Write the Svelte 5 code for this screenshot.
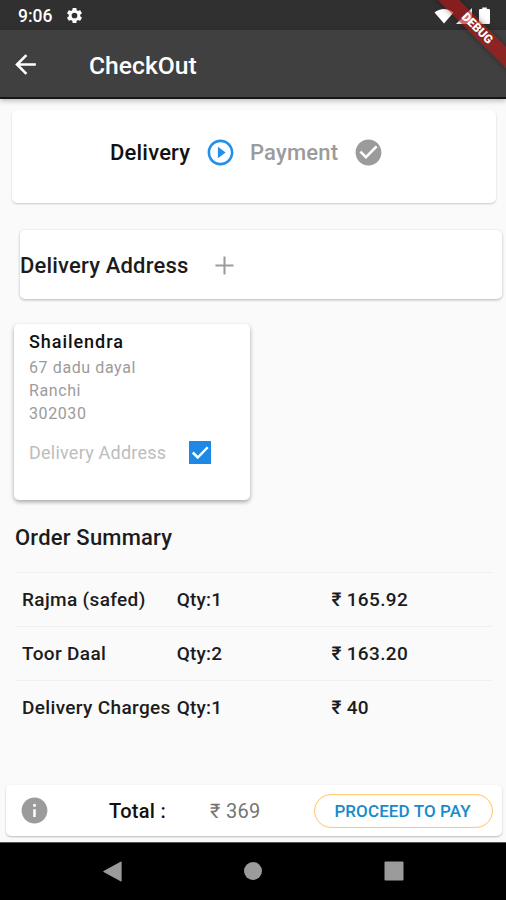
<script>
  const address = {
    name: 'Shailendra',
    lines: ['67 dadu dayal', 'Ranchi', '302030'],
  }

  const items = [
    { name: 'Rajma (safed)', qty: 1, price: '165.92' },
    { name: 'Toor Daal', qty: 2, price: '163.20' },
    { name: 'Delivery Charges', qty: 1, price: '40' },
  ]

  let isDelivery = $state(true)
  let total = 369
</script>

<div class="screen">
  <div class="status-bar">
    <span class="clock">9:06</span>
    <svg class="gear" viewBox="0 0 24 24">
      <path fill-rule="evenodd" d="M19.14 12.94c.04-.3.06-.61.06-.94 0-.32-.02-.64-.07-.94l2.03-1.58c.18-.14.23-.41.12-.61l-1.92-3.32c-.12-.22-.37-.29-.59-.22l-2.39.96c-.5-.38-1.03-.7-1.62-.94l-.36-2.54c-.04-.24-.24-.41-.48-.41h-3.84c-.24 0-.43.17-.47.41l-.36 2.54c-.59.24-1.13.57-1.62.94l-2.39-.96c-.22-.08-.47 0-.59.22L2.74 8.87c-.12.21-.08.47.12.61l2.03 1.58c-.05.3-.09.63-.09.94s.02.64.07.94l-2.03 1.58c-.18.14-.23.41-.12.61l1.92 3.32c.12.22.37.29.59.22l2.39-.96c.5.38 1.03.7 1.62.94l.36 2.54c.05.24.24.41.48.41h3.84c.24 0 .44-.17.47-.41l.36-2.54c.59-.24 1.13-.56 1.62-.94l2.39.96c.22.08.47 0 .59-.22l1.92-3.32c.12-.22.07-.47-.12-.61l-2.01-1.58zM12 15.6a3.6 3.6 0 1 1 0-7.2 3.6 3.6 0 0 1 0 7.2z" />
    </svg>
    <div class="indicators">
      <svg width="20" height="16" viewBox="0 0 20 16"><path d="M.5 4.6C5.9-.2 14.1-.2 19.5 4.6L10 15.6z" /></svg>
      <svg width="16" height="16" viewBox="0 0 16 16"><path d="M0 16L16 0v16z" /></svg>
      <svg width="11" height="17" viewBox="0 0 11 17"><path d="M1.2 2h2V.4h4.6V2h2Q11 2 11 3.200v12.600q0 1.200-1.200 1.200H1.200Q0 17 0 15.800V3.200Q0 2 1.200 2z" /></svg>
    </div>
  </div>

  <header class="app-bar">
    <button class="back" aria-label="Back">
      <svg viewBox="0 0 24 24"><path d="M20 11H7.830l5.590-5.590L12 4l-8 8 8 8 1.410-1.410L7.830 13H20v-2z" /></svg>
    </button>
    <h1>CheckOut</h1>
  </header>

  <div class="banner"><span>DEBUG</span></div>

  <main>
    <section class="card steps">
      <span class="step">Delivery</span>
      <svg class="icon blue" viewBox="0 0 24 24"><path d="M10 16.500l6-4.500-6-4.500v9zM12 2C6.480 2 2 6.480 2 12s4.480 10 10 10 10-4.480 10-10S17.520 2 12 2zm0 18c-4.410 0-8-3.590-8-8s3.590-8 8-8 8 3.590 8 8-3.590 8-8 8z" /></svg>
      <span class="step payment">Payment</span>
      <svg class="icon" viewBox="0 0 24 24"><path d="M12 2C6.480 2 2 6.480 2 12s4.480 10 10 10 10-4.480 10-10S17.520 2 12 2zm-2 15l-5-5 1.410-1.410L10 14.170l7.590-7.590L19 8l-9 9z" /></svg>
    </section>

    <section class="card add-address">
      <h2>Delivery Address</h2>
      <svg class="icon" viewBox="0 0 24 24"><path d="M19 12.800h-6.200V19h-1.600v-6.200H5v-1.600h6.200V5h1.600v6.200H19z" /></svg>
    </section>

    <section class="card address">
      <div class="name">{address.name}</div>
      {#each address.lines as line}
        <div class="line">{line}</div>
      {/each}
      <div class="use-address">
        <span>Delivery Address</span>
        <button
          class="checkbox"
          class:checked={isDelivery}
          role="checkbox"
          aria-checked={isDelivery}
          aria-label="Delivery Address"
          onclick={() => (isDelivery = !isDelivery)}
        >
          {#if isDelivery}
            <svg viewBox="0 0 18 18"><path d="M3 9.200l4 4 8-8.200" /></svg>
          {/if}
        </button>
      </div>
    </section>

    <h2 class="summary-title">Order Summary</h2>
    <div class="summary">
      {#each items as item}
        <div class="row">
          <span class="item-name">{item.name}</span>
          <span class="item-qty">Qty:{item.qty}</span>
          <span class="item-price">₹ {item.price}</span>
        </div>
      {/each}
    </div>
  </main>

  <footer class="card total-bar">
    <svg class="icon" viewBox="0 0 24 24"><path d="M12 2C6.480 2 2 6.480 2 12s4.480 10 10 10 10-4.480 10-10S17.520 2 12 2zm1 15h-2v-6h2v6zm0-8h-2V7h2v2z" /></svg>
    <span class="total-label">Total :</span>
    <span class="total-value">₹ {total}</span>
    <button class="pay">PROCEED TO PAY</button>
  </footer>

  <nav class="nav-bar">
    <svg width="19" height="21" viewBox="0 0 19 21"><path d="M18 .5q.6-.3.6.4v19.200q0 .7-.6.4L.6 11q-.8-.5 0-1z" /></svg>
    <svg width="18" height="18" viewBox="0 0 18 18"><circle cx="9" cy="9" r="9" /></svg>
    <svg width="20" height="20" viewBox="0 0 20 20"><rect x=".5" y=".5" width="19" height="19" rx="1" /></svg>
  </nav>
</div>

<style>
  :global(body) {
    background: #fafafa;
  }

  .screen {
    position: relative;
    display: flex;
    flex-direction: column;
    width: 506px;
    height: 900px;
    overflow: hidden;
    background: #fafafa;
    color: #1c1c1c;
    font-family: Roboto, 'Noto Sans', sans-serif;
    font-weight: 500;
  }

  h1,
  h2 {
    margin: 0;
    font-weight: 500;
    white-space: nowrap;
  }

  button {
    padding: 0;
    border: 0;
    background: none;
    font: inherit;
  }

  svg {
    display: block;
    flex: none;
  }

  .status-bar {
    display: flex;
    align-items: center;
    box-sizing: border-box;
    height: 30px;
    padding: 1px 16.5px 0 18px;
    background: #303030;
    fill: #fff;
  }

  .clock {
    width: 46.5px;
    color: #fff;
    font-size: 17.5px;
    line-height: 30px;
  }

  .gear {
    width: 19px;
    height: 19px;
  }

  .indicators {
    display: flex;
    align-items: center;
    gap: 2.5px;
    margin-left: auto;
  }

  .indicators svg:last-child {
    margin-left: 4px;
  }

  .app-bar {
    display: flex;
    align-items: center;
    box-sizing: border-box;
    height: 69px;
    padding: 2px 0 0 10px;
    background: #404040;
    border-bottom: 2px solid #161616;
    box-shadow: 0 2px 5px rgba(0, 0, 0, 0.25);
  }

  .back svg {
    width: 31px;
    height: 31px;
    fill: #fff;
  }

  h1 {
    margin: 2px 0 0 48px;
    color: #fff;
    font-size: 24.7px;
  }

  .banner {
    position: absolute;
    top: 21px;
    left: 417px;
    width: 120px;
    height: 15px;
    background: rgba(183, 20, 20, 0.64);
    box-shadow: 0 0 6px rgba(0, 0, 0, 0.35);
    color: #fff;
    font-size: 12px;
    font-weight: 900;
    line-height: 15px;
    text-align: center;
    transform: rotate(45deg);
  }

  main {
    display: flex;
    flex-direction: column;
    align-items: flex-start;
    flex: 1;
  }

  .card {
    box-sizing: border-box;
    background: #fff;
    border-radius: 5px;
    box-shadow: 0 1px 3px rgba(0, 0, 0, 0.28);
  }

  .icon {
    width: 31px;
    height: 31px;
    fill: #9b9b9b;
  }

  .icon.blue {
    fill: #2190ee;
  }

  .steps {
    display: flex;
    align-items: center;
    width: 484px;
    height: 93px;
    margin: 11px 0 0 11.5px;
    padding: 0 0 9px 98.5px;
    box-shadow: 0 1px 2px rgba(0, 0, 0, 0.2);
  }

  .step {
    width: 95px;
    color: #111;
    font-size: 22px;
    letter-spacing: 0.2px;
  }

  .step.payment {
    width: 102.5px;
    margin-left: 14px;
    color: #9b9b9b;
  }

  .add-address {
    display: flex;
    align-items: center;
    width: 482px;
    height: 69px;
    margin: 27px 0 0 20px;
    padding-top: 1px;
  }

  .add-address h2 {
    width: 189px;
    font-size: 22px;
    letter-spacing: 0.18px;
  }

  .address {
    width: 236px;
    height: 176px;
    margin: 25px 0 0 14px;
    padding: 7px 15px;
    box-shadow: 0 2px 4px rgba(0, 0, 0, 0.34);
  }

  .name {
    height: 25px;
    color: #111;
    font-size: 18px;
    line-height: 22px;
    letter-spacing: 0.95px;
  }

  .line {
    color: #9b9b9b;
    font-size: 16px;
    font-weight: 400;
    line-height: 23px;
    letter-spacing: 0.6px;
  }

  .use-address {
    display: flex;
    align-items: center;
    margin-top: 16px;
  }

  .use-address span {
    width: 159.5px;
    color: #bdbdbd;
    font-size: 18px;
    font-weight: 400;
    letter-spacing: 0.23px;
    white-space: nowrap;
  }

  .checkbox {
    box-sizing: border-box;
    width: 22.5px;
    height: 22.5px;
    border: 2px solid #757575;
  }

  .checkbox.checked {
    border: 0;
    background: #1e88e5;
  }

  .checkbox path {
    fill: none;
    stroke: #fff;
    stroke-width: 2;
  }

  .summary-title {
    margin: 25px 0 0 15px;
    font-size: 22px;
    line-height: 26px;
    letter-spacing: 0.2px;
  }

  .summary {
    width: 478px;
    margin: 21px 0 0 15px;
  }

  .row {
    display: flex;
    align-items: center;
    box-sizing: border-box;
    height: 54px;
    padding-left: 7px;
    border-top: 1px solid #f0f0f0;
    font-size: 19px;
    white-space: nowrap;
  }

  .item-name,
  .item-qty {
    width: 154.7px;
  }

  .item-name,
  .item-price {
    letter-spacing: 0.35px;
  }

  .item-qty {
    letter-spacing: 0.2px;
  }

  .total-bar {
    display: flex;
    align-items: center;
    width: 496px;
    height: 51px;
    margin: 0 0 6px 6px;
    padding-left: 13px;
    box-shadow: 0 1px 2px rgba(0, 0, 0, 0.25);
  }

  .total-label {
    width: 101px;
    margin-left: 59px;
    color: #111;
    font-size: 20px;
    letter-spacing: 0.3px;
  }

  .total-value {
    width: 104px;
    color: #757575;
    font-size: 20px;
    font-weight: 400;
    letter-spacing: 0.3px;
  }

  .pay {
    box-sizing: border-box;
    width: 179px;
    height: 34px;
    padding-right: 2px;
    border: 1px solid #ffcb74;
    border-radius: 17px;
    box-shadow: inset 0 0 1px #ffcb74;
    color: #178bca;
    font-size: 17px;
    letter-spacing: 0.1px;
    white-space: nowrap;
  }

  .nav-bar {
    display: flex;
    align-items: center;
    justify-content: center;
    gap: 122px;
    box-sizing: border-box;
    height: 58px;
    padding-bottom: 1px;
    border-top: 1px solid #555;
    background: #000;
    fill: #9b9b9b;
  }
</style>
